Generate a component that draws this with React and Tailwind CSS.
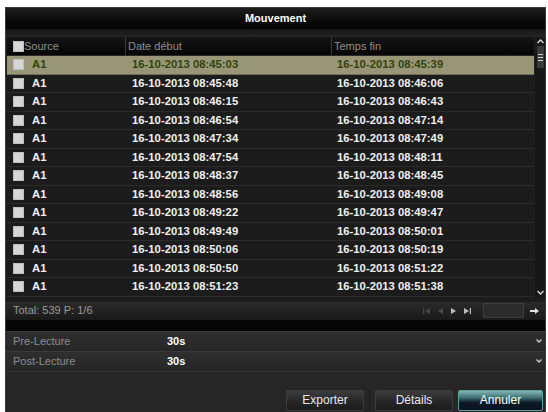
import React from "react";

const rows = [
  ["08:45:03", "08:45:39"],
  ["08:45:48", "08:46:06"],
  ["08:46:15", "08:46:43"],
  ["08:46:54", "08:47:14"],
  ["08:47:34", "08:47:49"],
  ["08:47:54", "08:48:11"],
  ["08:48:37", "08:48:45"],
  ["08:48:56", "08:49:08"],
  ["08:49:22", "08:49:47"],
  ["08:49:49", "08:50:01"],
  ["08:50:06", "08:50:19"],
  ["08:50:50", "08:51:22"],
  ["08:51:23", "08:51:38"],
];

function Check() {
  return <div className="w-[11px] h-[11px] bg-[#d6d6d6] shrink-0 shadow-[inset_0_0_0_1px_#bdbdbd]" />;
}

function Chevron({ up }) {
  return (
    <svg width="7" height="5" viewBox="0 0 7 5">
      <path d={up ? "M0.5 4 L3.5 1 L6.5 4" : "M0.5 1 L3.5 4 L6.5 1"} stroke="#d8d8d8" strokeWidth="1.4" fill="none" />
    </svg>
  );
}

function Btn({ children, active }) {
  return active ? (
    <div className="w-[85px] h-[21px] flex items-center justify-center text-white text-[12px] rounded-[2px] border border-[#5f9f9f] bg-[linear-gradient(to_bottom,#7fb6b3_0%,#3f6f74_35%,#0f1a26_60%,#0a1220_100%)]">
      {children}
    </div>
  ) : (
    <div className="w-[78px] h-[21px] flex items-center justify-center text-[#e8e8e8] text-[12px] rounded-[2px] border border-[#3c3c3c] bg-[linear-gradient(to_bottom,#3c3c3c,#262626_55%,#1c1c1c)]">
      {children}
    </div>
  );
}

export default function App() {
  return (
    <div className="w-[548px] h-[412px] bg-white overflow-hidden pt-[7px] pl-[5px] font-['Liberation_Sans',Arial,sans-serif]">
      <div className="w-[541px] h-[410px] bg-[#1e1e1e] border border-[#3a3a3a] flex flex-col">
        {/* title */}
        <div className="h-[21px] shrink-0 bg-[linear-gradient(to_bottom,#1e1e1e,#0a0a0a_60%,#050505)] flex items-center justify-center text-white text-[11px] font-bold">
          Mouvement
        </div>
        <div className="h-[8px] shrink-0 bg-[linear-gradient(to_bottom,#141414,#262626)]" />
        {/* table */}
        <div className="flex pl-[1px] shrink-0">
          <div className="w-[528px]">
            <div className="h-[19px] bg-[linear-gradient(to_bottom,#151515,#050505)] flex items-center text-[#8e8e8e] text-[11px] border-b border-[#2a2a2a]">
              <div className="w-[118px] flex items-center pl-[6px] h-full">
                <Check />
                <span>Source</span>
              </div>
              <div className="w-[206px] h-full flex items-center pl-[2px] border-l border-[#3a3a3a]">Date début</div>
              <div className="flex-1 h-full flex items-center pl-[2px] border-l border-[#3a3a3a]">Temps fin</div>
            </div>
            {rows.map((r, i) => {
              const sel = i === 0;
              return (
                <div
                  key={i}
                  className={
                    "h-[18.5px] flex items-center text-[11.3px] font-bold border-b " +
                    (sel
                      ? "bg-[#989676] text-[#34420f] border-[#6e6d55]"
                      : "bg-[#1c1c1c] text-[#f0f0f0] border-[#2b2b2b]")
                  }
                >
                  <div className="w-[118px] flex items-center pl-[6px]">
                    <Check />
                    <span className="ml-[8px]">A1</span>
                  </div>
                  <div className="w-[206px] pl-[7px]">16-10-2013 {r[0]}</div>
                  <div className="flex-1 pl-[6px]">16-10-2013 {r[1]}</div>
                </div>
              );
            })}
          </div>
          <div className="w-[10px] ml-[1px] bg-[#171717] flex flex-col items-center pt-[2px] pb-[2px]">
            <Chevron up />
            <div className="mt-[2px] w-[7px] h-[22px] bg-[#3a3a3a] flex flex-col items-center justify-center gap-[2px] rounded-[1px]">
              <div className="w-[5px] h-[1px] bg-[#cfcfcf]" />
              <div className="w-[5px] h-[1px] bg-[#cfcfcf]" />
              <div className="w-[5px] h-[1px] bg-[#cfcfcf]" />
            </div>
            <div className="flex-1" />
            <Chevron />
          </div>
        </div>
        <div className="h-[5px] shrink-0 bg-[#1c1c1c]" />
        {/* total bar */}
        <div className="h-[18px] shrink-0 bg-[linear-gradient(to_bottom,#2a2a2a,#1a1a1a)] flex items-center pl-[7px] pr-[6px] text-[11px] text-[#9a9a9a]">
          <span>Total: 539 P: 1/6</span>
          <div className="flex-1" />
          <div className="flex items-center gap-[8px] mr-[12px]">
            <svg width="7" height="6" viewBox="0 0 7 6"><rect x="0" y="0" width="1.2" height="6" fill="#4a4a4a" /><path d="M7 0 L2 3 L7 6Z" fill="#4a4a4a" /></svg>
            <svg width="5" height="6" viewBox="0 0 5 6"><path d="M5 0 L0 3 L5 6Z" fill="#4a4a4a" /></svg>
            <svg width="5" height="6" viewBox="0 0 5 6"><path d="M0 0 L5 3 L0 6Z" fill="#bdbdbd" /></svg>
            <svg width="7" height="6" viewBox="0 0 7 6"><path d="M0 0 L5 3 L0 6Z" fill="#bdbdbd" /><rect x="5.8" y="0" width="1.2" height="6" fill="#bdbdbd" /></svg>
          </div>
          <div className="w-[41px] h-[15px] bg-[#2c2c2c] border border-[#3e3e3e]" />
          <svg className="ml-[6px]" width="9" height="6" viewBox="0 0 9 6"><path d="M0 2 H5 V0 L9 3 L5 6 V4 H0Z" fill="#e0e0e0" /></svg>
        </div>
        <div className="h-[11px] shrink-0 bg-[#060606]" />
        {/* settings rows */}
        {["Pre-Lecture", "Post-Lecture"].map((l) => (
          <div key={l} className="h-[20px] shrink-0 flex items-center bg-[linear-gradient(to_bottom,#2f2f2f,#262626)] border-t border-[#3a3a3a] text-[11px] pl-[7px] pr-[3px]">
            <span className="w-[154px] text-[#8c8c8c]">{l}</span>
            <span className="text-white font-bold">30s</span>
            <div className="flex-1" />
            <svg width="6" height="4" viewBox="0 0 6 4"><path d="M0.5 0.5 L3 3 L5.5 0.5" stroke="#cfcfcf" strokeWidth="1.3" fill="none" /></svg>
          </div>
        ))}
        <div className="flex-1 bg-[#262626] border-t border-[#333] flex items-start justify-end pt-[18px] pr-[2px] gap-[5px]">
          <Btn>Exporter</Btn>
          <div className="w-[1px] h-[21px] bg-[#1a1a1a]" />
          <Btn>Détails</Btn>
          <Btn active>Annuler</Btn>
        </div>
      </div>
    </div>
  );
}
